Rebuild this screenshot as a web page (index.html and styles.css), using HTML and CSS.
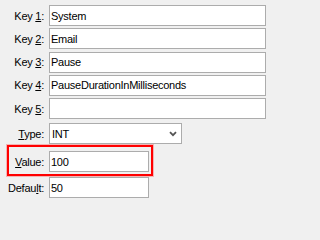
FILE: index.html
```html
<!DOCTYPE html>
<html>
<head>
<meta charset="utf-8">
<link rel="stylesheet" href="styles.css">
</head>
<body>
<div class="form">
  <div class="keys">
    <div class="row"><span class="lbl">Key <u>1</u>:</span><input class="field wide" value="System"></div>
    <div class="row"><span class="lbl">Key <u>2</u>:</span><input class="field wide" value="Email"></div>
    <div class="row"><span class="lbl">Key <u>3</u>:</span><input class="field wide" value="Pause"></div>
    <div class="row"><span class="lbl">Key <u>4</u>:</span><input class="field wide" value="PauseDurationInMilliseconds"></div>
    <div class="row"><span class="lbl">Key <u>5</u>:</span><input class="field wide" value=""></div>
  </div>
  <div class="row type-row"><span class="lbl"><u>T</u>ype:</span>
    <div class="field combo"><span>INT</span>
      <svg class="chev" width="8" height="6" viewBox="0 0 8 6"><path d="M1 1.2 L4 4.2 L7 1.2" fill="none" stroke="#555" stroke-width="1.8"/></svg>
    </div>
  </div>
  <div class="hl">
    <div class="row"><span class="lbl hl-lbl"><u>V</u>alue:</span><input class="field short" value="100"></div>
  </div>
  <div class="row default-row"><span class="lbl">Defau<u>l</u>t:</span><input class="field short" value="50"></div>
</div>
</body>
</html>
```

FILE: styles.css
```css
body {
  margin: 0;
  background: #f0f0f0;
  font: 11px "Liberation Sans", Arial, sans-serif;
  letter-spacing: -0.25px;
  color: #000;
}
.form {
  display: flex;
  flex-direction: column;
  padding-top: 5px;
}
.keys {
  display: flex;
  flex-direction: column;
  gap: 2.33px;
}
.row {
  display: flex;
  align-items: center;
  height: 21px;
}
.lbl {
  flex: none;
  width: 44px;
  margin-right: 5px;
  text-align: right;
  white-space: nowrap;
}
.lbl u {
  text-underline-offset: 1px;
}
.field {
  box-sizing: border-box;
  height: 21px;
  margin: 0;
  padding: 0 1px;
  border: 1px solid #acacac;
  background: #fff;
  font: inherit;
  letter-spacing: inherit;
  color: #000;
  outline: none;
}
.wide {
  width: 217px;
}
.short {
  width: 100px;
}
.type-row {
  margin-top: 4px;
}
.combo {
  width: 133px;
  display: flex;
  align-items: center;
  justify-content: space-between;
  padding: 0 4px 0 2px;
}
.chev {
  display: block;
}
.hl {
  margin-top: 1px;
  margin-left: 7px;
  width: 146px;
  box-sizing: border-box;
  border: 2px solid #ff0000;
  box-shadow: 0 0 0 1px rgba(255, 0, 0, 0.25);
  padding: 4px 0 2px;
}
.hl-lbl {
  width: 35px;
}
.default-row {
  margin-top: 1px;
}
```
